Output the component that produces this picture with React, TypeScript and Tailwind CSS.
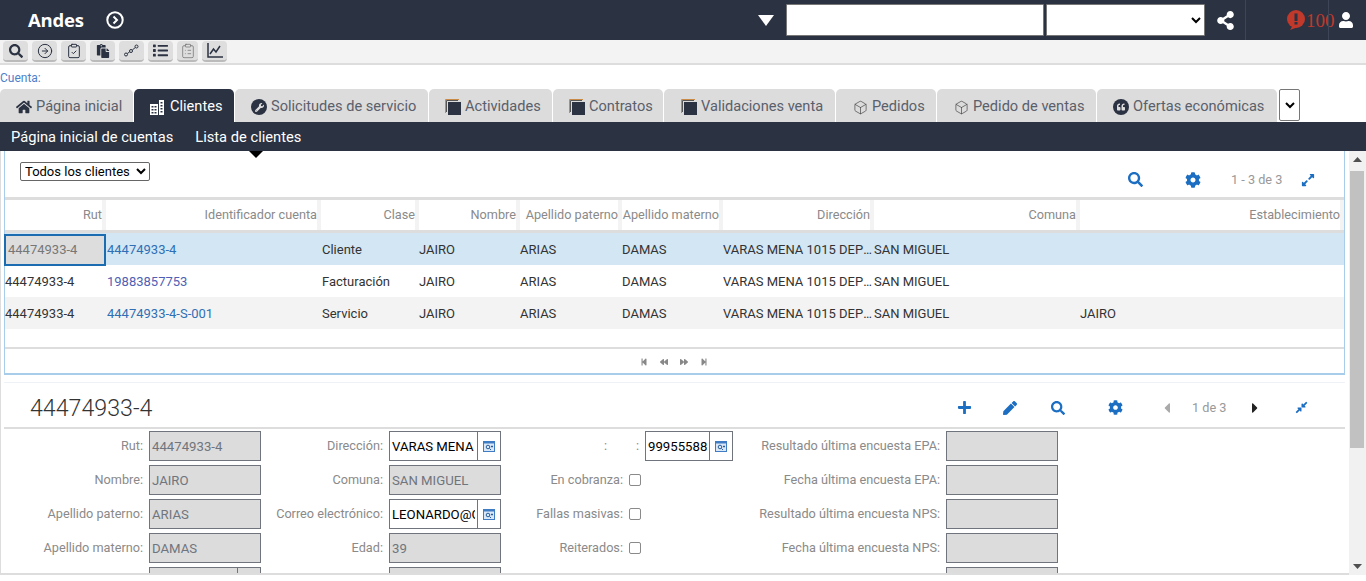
import { ReactNode } from "react";
import { Box, CircleArrowRight, ClipboardCheck, ClipboardList } from "lucide-react";
import {
  FaBackward,
  FaCaretLeft,
  FaCaretRight,
  FaCog,
  FaCompressAlt,
  FaExpandAlt,
  FaForward,
  FaHome,
  FaList,
  FaPaste,
  FaPen,
  FaPlus,
  FaQuoteLeft,
  FaSearch,
  FaShareAlt,
  FaStepBackward,
  FaStepForward,
  FaUser,
  FaWrench,
} from "react-icons/fa";

function LayersIcon() {
  return (
    <svg width="16" height="16" viewBox="0 0 16 16" className="shrink-0">
      <path d="M0.5 14V0.5H14" fill="none" stroke="#c98a45" strokeWidth="1" />
      <path d="M1.5 13V1.5H13" fill="none" stroke="#555" strokeWidth="1" />
      <rect x="3" y="3" width="13" height="13" fill="#2b3242" />
    </svg>
  );
}

function BuildingIcon() {
  return (
    <svg width="14" height="15" viewBox="0 0 14 15" className="mr-[2px] shrink-0">
      <rect x="0" y="4" width="8" height="11" fill="#fff" />
      <rect x="9" y="0" width="5" height="15" fill="#fff" />
      {[6, 9, 12].map((y) => (
        <g key={y} fill="#2b3242">
          <rect x="1.5" y={y} width="2" height="1.5" />
          <rect x="4.5" y={y} width="2" height="1.5" />
        </g>
      ))}
      {[2, 5, 8, 11].map((y) => (
        <rect key={y} x="10.5" y={y} width="2" height="1.5" fill="#2b3242" />
      ))}
    </svg>
  );
}

function RoundIcon({ children }: { children: ReactNode }) {
  return (
    <span className="flex h-4 w-4 shrink-0 items-center justify-center rounded-full bg-[#2b3242] text-[#ddd]">
      {children}
    </span>
  );
}

const tabs = [
  { label: "Página inicial", w: "w-[133px]", pl: "pl-4", icon: <FaHome className="text-[16px] text-[#2b3242]" /> },
  { label: "Clientes", w: "w-[100px]", pl: "pl-4", active: true, icon: <BuildingIcon /> },
  { label: "Solicitudes de servicio", w: "w-[193px]", pl: "pl-4", icon: <RoundIcon><FaWrench className="text-[9px]" /></RoundIcon> },
  { label: "Actividades", w: "w-[123px]", pl: "pl-4", icon: <LayersIcon /> },
  { label: "Contratos", w: "w-[110px]", pl: "pl-4", icon: <LayersIcon /> },
  { label: "Validaciones venta", w: "w-[171px]", pl: "pl-[17px]", icon: <LayersIcon /> },
  { label: "Pedidos", w: "w-[100px]", pl: "pl-[17px]", icon: <Box size={15} strokeWidth={1} className="text-[#333]" /> },
  { label: "Pedido de ventas", w: "w-[159px]", pl: "pl-[17px]", icon: <Box size={15} strokeWidth={1} className="text-[#333]" /> },
  { label: "Ofertas económicas", w: "w-[180px]", pl: "pl-4", icon: <RoundIcon><FaQuoteLeft className="text-[8px]" /></RoundIcon> },
];

const columns = [
  { label: "Rut", w: "w-[101px]" },
  { label: "Identificador cuenta", w: "w-[215px]" },
  { label: "Clase", w: "w-[98px]" },
  { label: "Nombre", w: "w-[101px]" },
  { label: "Apellido paterno", w: "w-[102px]" },
  { label: "Apellido materno", w: "w-[101px]" },
  { label: "Dirección", w: "w-[151px]" },
  { label: "Comuna", w: "w-[206px]" },
  { label: "Establecimiento", w: "w-[264px]" },
];

const rows = [
  { id: "44474933-4", visited: false, clase: "Cliente", est: "", bg: "bg-[#d2e6f4]", selected: true },
  { id: "19883857753", visited: true, clase: "Facturación", est: "", bg: "bg-white", selected: false },
  { id: "44474933-4-S-001", visited: false, clase: "Servicio", est: "JAIRO", bg: "bg-[#f3f3f3]", selected: false },
];

function ToolButton({ children, narrow }: { children: ReactNode; narrow?: boolean }) {
  return (
    <button
      className={`flex h-[21px] items-center justify-center rounded-[4px] border-b-2 border-[#bbb] bg-[#dedede] text-[#2b3242] ${
        narrow ? "w-[21px]" : "w-[25px]"
      }`}
    >
      {children}
    </button>
  );
}

function Field({ value, lookup, w = "w-[112px]" }: { value?: string; lookup?: boolean; w?: string }) {
  if (lookup) {
    return (
      <div className={`flex h-[30px] ${w} border border-[#70757d] bg-white`}>
        <input
          readOnly
          value={value}
          className="h-full min-w-0 flex-1 bg-white px-[2px] text-[13.2px] text-black outline-none"
        />
        <span className="flex w-[23px] shrink-0 items-center justify-center border-l border-[#70757d]">
          <svg width="12" height="11" viewBox="0 0 12 11">
            <rect x="0.5" y="0.5" width="11" height="10" fill="#dbe8f7" stroke="#3f7cc4" />
            <rect x="0.5" y="0.5" width="11" height="2" fill="#3f7cc4" />
            <circle cx="5" cy="6" r="1.8" fill="none" stroke="#2a5f9e" />
            <path d="M6.5 7.5l1.5 1.5M9 4.500v2M8 5.500h2" stroke="#2a5f9e" />
          </svg>
        </span>
      </div>
    );
  }
  return (
    <input
      readOnly
      value={value ?? ""}
      className={`h-[30px] ${w} border border-[#70757d] bg-[#dcdcdc] px-[2px] text-[13.2px] text-[#70757d] outline-none`}
    />
  );
}

function Label({ children, w }: { children: ReactNode; w: string }) {
  return <span className={`${w} shrink-0 text-right text-[12.7px] text-[#8a8a8a]`}>{children}</span>;
}

function Check() {
  return <span className="ml-[6px] h-[12px] w-[12px] rounded-[2px] border border-[#8a8a8a] bg-white" />;
}

function FormRow({ children }: { children: ReactNode }) {
  return <div className="flex h-[30px] shrink-0 items-center">{children}</div>;
}

export default function App() {
  return (
    <div className="flex h-screen w-full flex-col overflow-hidden bg-white font-['Roboto',sans-serif]">
      {/* top bar */}
      <header className="flex h-10 shrink-0 items-center bg-[#2b3242] text-white">
        <span className="ml-[28px] w-[78px] font-['Open_Sans',sans-serif] text-[18.5px] font-bold tracking-[-0.2px]">Andes</span>
        <svg width="18" height="18" viewBox="0 0 18 18">
          <circle cx="9" cy="9" r="7.7" fill="none" stroke="#fff" strokeWidth="2" />
          <path d="M7.5 5.5L11 9l-3.500 3.500" fill="none" stroke="#fff" strokeWidth="2" />
        </svg>
        <svg width="16" height="11" viewBox="0 0 16 11" className="ml-[634px]">
          <path d="M0 0h16L8 11z" fill="#fff" />
        </svg>
        <input className="ml-3 h-8 w-[258px] rounded-[1px] border border-[#777] bg-white" />
        <select className="ml-[2px] h-8 w-[159px] rounded-[1px] border border-[#777] bg-white text-black" />
        <FaShareAlt className="ml-[11px] text-[19px]" />
        <div className="ml-[10px] h-10 w-px bg-[#3d4557]" />
        <div className="relative flex h-10 items-center">
          <svg width="20" height="20" viewBox="0 0 20 20" className="ml-[40px]">
            <circle cx="10" cy="9" r="9" fill="#c0392b" />
            <path d="M7 15l-3 5 8-3z" fill="#c0392b" />
            <rect x="8.500" y="3.500" width="3" height="7.500" fill="#2b3242" />
            <rect x="8.500" y="12" width="3" height="2.500" fill="#2b3242" />
          </svg>
          <span className="font-['Liberation_Serif',serif] text-[19px] leading-none text-[#c0392b]">100</span>
          <div className="absolute left-[82px] top-0 h-10 w-px bg-[#3d4557]" />
        </div>
        <FaUser className="ml-[3px] text-[16px]" />
      </header>

      {/* toolbar */}
      <div className="flex h-[25px] shrink-0 items-start gap-1 border-b-2 border-[#ddd] bg-[#f3f3f3] pl-[3px] pt-px">
        <ToolButton><FaSearch className="text-[14px]" /></ToolButton>
        <ToolButton><CircleArrowRight size={16} strokeWidth={1.5} /></ToolButton>
        <ToolButton><ClipboardCheck size={16} strokeWidth={1.5} /></ToolButton>
        <ToolButton><FaPaste className="text-[14px]" /></ToolButton>
        <ToolButton>
          <svg width="15" height="13" viewBox="0 0 15 13" fill="none" stroke="#2b3242">
            <circle cx="2" cy="10.500" r="1.500" />
            <circle cx="7" cy="7" r="1.500" />
            <circle cx="12.500" cy="2.500" r="1.500" />
            <path d="M3.300 9.500l2.400-1.600M8.300 6l3-2.500" />
          </svg>
        </ToolButton>
        <ToolButton><FaList className="text-[15px]" /></ToolButton>
        <ToolButton narrow><ClipboardList size={16} strokeWidth={1} className="text-[#666]" /></ToolButton>
        <ToolButton>
          <svg width="16" height="15" viewBox="0 0 16 15" fill="none" stroke="#2b3242" strokeWidth="1.5">
            <path d="M1 0v14h15" />
            <path d="M3 11l3.500-5 2.500 3 4-6" />
          </svg>
        </ToolButton>
      </div>

      <div className="h-6 shrink-0 pt-[6px] text-[12px] leading-[14px] text-[#4f7fc9]">Cuenta:</div>

      {/* tabs */}
      <nav className="flex h-[33px] shrink-0 gap-px">
        {tabs.map((t) => (
          <div
            key={t.label}
            className={`flex h-[33px] shrink-0 items-center gap-1 rounded-t-[5px] pt-[3px] text-[14.6px] ${t.w} ${t.pl} ${
              t.active ? "bg-[#2b3242] text-white" : "bg-[#dcdcdc] text-[#5a606b]"
            }`}
          >
            {t.icon}
            <span className="whitespace-nowrap">{t.label}</span>
          </div>
        ))}
        <button className="ml-px flex h-[32px] w-[21px] items-center justify-center rounded-[2px] border border-[#777] bg-white">
          <svg width="10" height="7" viewBox="0 0 10 7">
            <path d="M1 1l4 4 4-4" fill="none" stroke="#000" strokeWidth="2" />
          </svg>
        </button>
      </nav>

      <div className="flex h-[29px] shrink-0 items-center gap-[22px] bg-[#2b3242] pl-[11px] pt-[2px] text-[14.7px] text-white">
        <span>Página inicial de cuentas</span>
        <span>Lista de clientes</span>
      </div>

      {/* main */}
      <div className="flex min-h-0 flex-1 pb-[6px]">
        <div className="min-w-0 flex-1 overflow-hidden border-b-2 border-l border-[#ddd] pl-[3px] pr-1">
          {/* list applet */}
          <section className="relative h-[224px] border-x border-b-2 border-x-[#a8cdea] border-b-[#a8cdea]">
            <svg width="14" height="7" viewBox="0 0 14 7" className="absolute left-[244px] top-0">
              <path d="M0 0h14L7 7z" fill="#000" />
            </svg>
            <div className="flex h-[46px] items-start pl-[15px] pt-[11px]">
              <select className="h-[19px] w-[130px] rounded-[2px] border border-[#666] bg-white text-[13px] leading-none text-black">
                <option>Todos los clientes</option>
              </select>
              <div className="ml-auto flex items-center pt-[8px] text-[#1b6ec2]">
                <FaSearch className="text-[15px]" />
                <FaCog className="ml-[42px] text-[16px]" />
                <span className="ml-[30px] w-[52px] whitespace-nowrap text-[12.7px] text-[#999]">1 - 3 de 3</span>
                <FaExpandAlt className="ml-[18px] mr-[29px] text-[14px]" />
              </div>
            </div>
            <div className="flex h-[36px] border-y-[3px] border-[#ddd] text-[12.7px] text-[#8a8a8a]">
              {columns.map((c) => (
                <div key={c.label} className={`${c.w} flex shrink-0 items-center justify-end whitespace-nowrap border-r-4 border-[#f3f3f3]`}>
                  {c.label}
                </div>
              ))}
            </div>
            {rows.map((r) => (
              <div key={r.id} className={`flex h-8 items-center pt-px text-[13px] text-[#333] ${r.bg}`}>
                <div
                  className={
                    r.selected
                      ? "-ml-px flex h-8 w-[102px] shrink-0 items-center border-2 border-[#1b6cb0] bg-[#ddd] pl-[2px] text-[#777]"
                      : "w-[101px] shrink-0"
                  }
                >
                  44474933-4
                </div>
                <div className={`w-[215px] shrink-0 pl-px ${r.visited ? "text-[#4e5fb5]" : "text-[#2f6fb5]"}`}>{r.id}</div>
                <div className="w-[98px] shrink-0 pl-px">{r.clase}</div>
                <div className="w-[101px] shrink-0">JAIRO</div>
                <div className="w-[102px] shrink-0">ARIAS</div>
                <div className="w-[101px] shrink-0">DAMAS</div>
                <div className="w-[151px] shrink-0 truncate">VARAS MENA 1015 DEPTO 404</div>
                <div className="w-[206px] shrink-0">SAN MIGUEL</div>
                <div className="w-[264px] shrink-0">{r.est}</div>
              </div>
            ))}
            <div className="mt-[18px] flex h-[27px] items-center justify-center gap-[12px] border-t-2 border-[#ddd] pr-[2px] text-[8px] text-[#888]">
              <FaStepBackward />
              <FaBackward />
              <FaForward />
              <FaStepForward />
            </div>
          </section>

          {/* form applet */}
          <section className="mt-[7px] border-t border-[#eef2f6]">
            <div className="flex h-[46px] items-center border-b-2 border-[#ddd] pl-[26px] pt-[6px]">
              <h2 className="text-[23.2px] font-light text-[#333]">44474933-4</h2>
              <div className="ml-auto flex items-center text-[#1b6ec2]">
                <FaPlus className="text-[15px]" />
                <FaPen className="ml-[31px] text-[14px]" />
                <FaSearch className="ml-[34px] text-[14px]" />
                <FaCog className="ml-[43px] text-[15px]" />
                <FaCaretLeft className="ml-[36px] text-[16px] text-[#aaa]" />
                <span className="ml-[17px] w-[36px] whitespace-nowrap text-[12.7px] text-[#999]">1 de 3</span>
                <FaCaretRight className="ml-[19px] text-[16px] text-[#222]" />
                <FaCompressAlt className="ml-[32px] mr-[37px] text-[13px]" />
              </div>
            </div>
            <div className="flex flex-col gap-1 pl-px pt-[2px]">
              <FormRow>
                <Label w="w-[138px]">Rut:</Label>
                <span className="w-[6px]" />
                <Field value="44474933-4" />
                <Label w="w-[122px]">Dirección:</Label>
                <span className="w-[6px]" />
                <Field value="VARAS MENA 1015 DEPTO 404" lookup />
                <span className="w-[106px] text-right text-[12.7px] text-[#8a8a8a]">:</span>
                <span className="w-[32px] text-right text-[12.7px] text-[#8a8a8a]">:</span>
                <span className="w-[6px]" />
                <Field value="999555888" lookup w="w-[88px]" />
                <Label w="w-[207px]">Resultado última encuesta EPA:</Label>
                <span className="w-[6px]" />
                <Field />
              </FormRow>
              <FormRow>
                <Label w="w-[138px]">Nombre:</Label>
                <span className="w-[6px]" />
                <Field value="JAIRO" />
                <Label w="w-[122px]">Comuna:</Label>
                <span className="w-[6px]" />
                <Field value="SAN MIGUEL" />
                <Label w="w-[122px]">En cobranza:</Label>
                <Check />
                <Label w="w-[299px]">Fecha última encuesta EPA:</Label>
                <span className="w-[6px]" />
                <Field />
              </FormRow>
              <FormRow>
                <Label w="w-[138px]">Apellido paterno:</Label>
                <span className="w-[6px]" />
                <Field value="ARIAS" />
                <Label w="w-[122px]">Correo electrónico:</Label>
                <span className="w-[6px]" />
                <Field value="LEONARDO@GMAIL.COM" lookup />
                <Label w="w-[122px]">Fallas masivas:</Label>
                <Check />
                <Label w="w-[299px]">Resultado última encuesta NPS:</Label>
                <span className="w-[6px]" />
                <Field />
              </FormRow>
              <FormRow>
                <Label w="w-[138px]">Apellido materno:</Label>
                <span className="w-[6px]" />
                <Field value="DAMAS" />
                <Label w="w-[122px]">Edad:</Label>
                <span className="w-[6px]" />
                <Field value="39" />
                <Label w="w-[122px]">Reiterados:</Label>
                <Check />
                <Label w="w-[299px]">Fecha última encuesta NPS:</Label>
                <span className="w-[6px]" />
                <Field />
              </FormRow>
              <FormRow>
                <span className="w-[144px]" />
                <div className="flex h-[30px] w-[112px] border border-[#70757d] bg-[#dcdcdc]">
                  <span className="ml-auto h-full w-[23px] border-l border-[#70757d]" />
                </div>
                <span className="w-[128px]" />
                <Field />
                <span className="w-[445px]" />
                <Field />
              </FormRow>
            </div>
          </section>
        </div>

        {/* scrollbar */}
        <div className="flex w-[17px] shrink-0 flex-col items-center bg-[#f1f1f1] pt-[6px]">
          <svg width="9" height="5" viewBox="0 0 9 5">
            <path d="M0 5h9L4.500 0z" fill="#505050" />
          </svg>
          <div className="ml-[-1px] mt-[9px] h-[277px] w-[14px] bg-[#c1c1c1]" />
          <svg width="9" height="5" viewBox="0 0 9 5" className="mb-[6px] mt-auto">
            <path d="M0 0h9L4.500 5z" fill="#505050" />
          </svg>
        </div>
      </div>
    </div>
  );
}
